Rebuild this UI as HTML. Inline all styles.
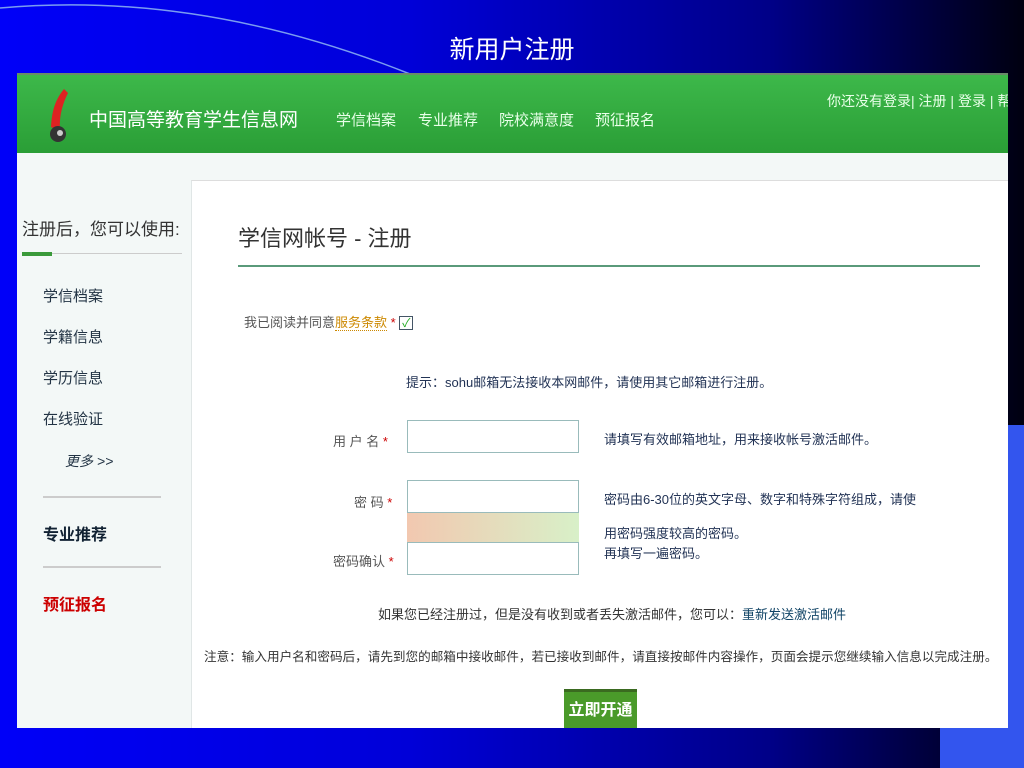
<!DOCTYPE html>
<html><head><meta charset="utf-8"><style>
*{margin:0;padding:0;box-sizing:border-box}
body{width:1024px;height:768px;overflow:hidden;position:relative;background:linear-gradient(90deg,#0000f8 0%,#0000d8 40%,#000088 75%,#000010 100%);font-family:"Liberation Sans","Noto Sans CJK SC",sans-serif}
.abs{position:absolute}
.title{left:0;width:1024px;top:30px;text-align:center;color:#fff;font-size:25px}
.shot{left:17px;top:73px;width:991px;height:655px;background:#f3f8f7;overflow:hidden}
.hdr{left:0;top:0;width:991px;height:80px;background:linear-gradient(#3db84a,#2a9e36);border-top:2px solid #6a8a6a}
.hdr .t{color:#fff;font-size:19px;top:30px;left:72px}
.nav{color:#e8ffe8;font-size:15px;top:34px}
.main{left:174px;top:107px;width:817px;height:548px;background:#fff;border-top:1px solid #ddd;border-left:1px solid #e0e6e6}
.s{color:#555;font-size:13px}
.inp{width:172px;height:33px;border:1px solid #9bb;background:#fff}
.tip{color:#235;font-size:13px}
</style></head><body>
<svg class="abs" style="left:0;top:0" width="600" height="80"><path d="M0 8 Q200 -10 410 74" stroke="#7a9cf0" stroke-width="1.5" fill="none"/></svg>
<div class="abs title">新用户注册</div>
<div class="abs" style="left:1008px;top:425px;width:16px;height:343px;background:#3355ee"></div>
<div class="abs" style="left:940px;top:728px;width:84px;height:40px;background:#3355ee"></div>
<div class="abs shot">
 <div class="abs hdr">
  <svg class="abs" style="left:25px;top:12px" width="36" height="58"><path d="M22 2 C14 12 10 22 9 40 L18 44 C17 30 20 18 26 6Z" fill="#d22"/><circle cx="16" cy="47" r="8" fill="#333"/><circle cx="18" cy="46" r="3" fill="#ccc"/></svg>
  <div class="abs t">中国高等教育学生信息网</div>
  <div class="abs nav" style="left:319px">学信档案</div>
  <div class="abs nav" style="left:401px">专业推荐</div>
  <div class="abs nav" style="left:482px">院校满意度</div>
  <div class="abs nav" style="left:578px">预征报名</div>
  <div class="abs" style="left:810px;top:16px;color:#e8ffe8;font-size:14px;white-space:nowrap">你还没有登录| 注册 | 登录 | 帮</div>
 </div>
 <div class="abs" style="left:5px;top:142px;font-size:17px;color:#333">注册后，您可以使用:</div>
 <div class="abs" style="left:5px;top:180px;width:160px;height:1px;background:#ccc"></div>
 <div class="abs" style="left:5px;top:179px;width:30px;height:4px;background:#3a9a3a"></div>
 <div class="abs" style="left:26px;top:203px;font-size:15px;color:#234;line-height:41px">学信档案<br>学籍信息<br>学历信息<br>在线验证</div>
 <div class="abs" style="left:48px;top:378px;font-size:14px;color:#234;font-style:italic">更多 &gt;&gt;</div>
 <div class="abs" style="left:26px;top:423px;width:118px;height:2px;background:#ccc"></div>
 <div class="abs" style="left:26px;top:448px;font-size:16px;color:#123;font-weight:bold">专业推荐</div>
 <div class="abs" style="left:26px;top:493px;width:118px;height:2px;background:#ccc"></div>
 <div class="abs" style="left:26px;top:518px;font-size:16px;color:#c00;font-weight:bold">预征报名</div>
 <div class="abs main">
  <div class="abs" style="left:46px;top:40px;font-size:22px;color:#333">学信网帐号 - 注册</div>
  <div class="abs" style="left:46px;top:84px;width:742px;height:2px;background:#5a9a7a"></div>
  <div class="abs s" style="left:52px;top:131px">我已阅读并同意<span style="color:#c80;border-bottom:1px dotted #c80">服务条款</span> <span style="color:#c00">*</span> <span style="display:inline-block;width:14px;height:14px;border:1px solid #456;color:#2a2;font-size:12px;line-height:12px;text-align:center">✓</span></div>
  <div class="abs tip" style="left:214px;top:191px">提示：sohu邮箱无法接收本网邮件，请使用其它邮箱进行注册。</div>
  <div class="abs s" style="left:141px;top:250px">用 户 名 <span style="color:#c00">*</span></div>
  <div class="abs inp" style="left:215px;top:239px"></div>
  <div class="abs tip" style="left:412px;top:248px">请填写有效邮箱地址，用来接收帐号激活邮件。</div>
  <div class="abs s" style="left:162px;top:311px">密 码 <span style="color:#c00">*</span></div>
  <div class="abs inp" style="left:215px;top:299px"></div>
  <div class="abs" style="left:215px;top:332px;width:172px;height:30px;background:linear-gradient(90deg,#f2c8b0,#d8f0c8)"></div>
  <div class="abs s" style="left:141px;top:370px">密码确认 <span style="color:#c00">*</span></div>
  <div class="abs inp" style="left:215px;top:361px"></div>
  <div class="abs tip" style="left:412px;top:308px">密码由6-30位的英文字母、数字和特殊字符组成，请使</div>
  <div class="abs tip" style="left:412px;top:342px">用密码强度较高的密码。</div>
  <div class="abs tip" style="left:412px;top:362px">再填写一遍密码。</div>
  <div class="abs" style="left:186px;top:423px;font-size:13px;color:#333">如果您已经注册过，但是没有收到或者丢失激活邮件，您可以：<span style="color:#146">重新发送激活邮件</span></div>
  <div class="abs" style="left:12px;top:465px;font-size:12.6px;color:#333;white-space:nowrap">注意：输入用户名和密码后，请先到您的邮箱中接收邮件，若已接收到邮件，请直接按邮件内容操作，页面会提示您继续输入信息以完成注册。</div>
  <div class="abs" style="left:372px;top:508px;width:73px;height:41px;background:#4a9a2a;border-top:3px solid #3a6a20;color:#fff;font-size:16px;font-weight:bold;text-align:center;line-height:38px">立即开通</div>
 </div>
</div>
</body></html>
